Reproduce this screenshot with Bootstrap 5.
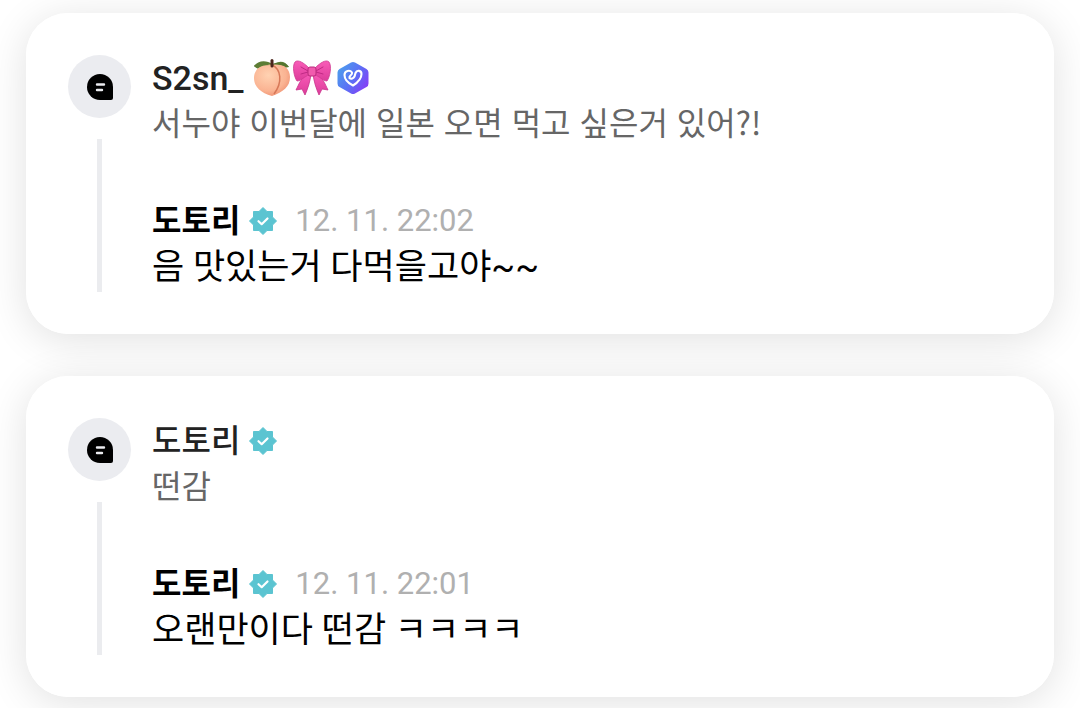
<!DOCTYPE html>
<html lang="ko">
<head>
<meta charset="utf-8">
<meta name="viewport" content="width=device-width, initial-scale=1">
<title>도토리</title>
<link href="https://cdn.jsdelivr.net/npm/bootstrap@5.3.0/dist/css/bootstrap.min.css" rel="stylesheet">
<style>
  body { font-family: Roboto, "Noto Sans CJK KR", sans-serif; background: #fff; color: #000; overflow-x: hidden; }
  .feed { padding: 13px 26px 11px; gap: 42px; isolation: isolate; }
  .thread { position: relative; border: 0; border-radius: 42px; }
  /* shadows sit behind every card, so neighbours stay white */
  .thread::before { content: ""; position: absolute; inset: 0; z-index: -1; border-radius: inherit; box-shadow: 0 6px 42px rgba(0, 0, 0, .12); }
  .thread-body { padding: 42px; gap: 21px; }
  .avatar { width: 63px; height: 63px; background: #ebecf0; }
  .rail { gap: 21px; }
  .rail-line { width: 5px; background: #ebecef; }
  .row-line { line-height: 46px; min-height: 46px; }
  .author { font-size: 34px; font-weight: 500; color: #222; }
  .author-ko { font-size: 32px; font-weight: 500; color: #222; }
  .owner { font-weight: 700; color: #000; }
  .question { font: 32px/40px "Noto Sans CJK KR", sans-serif; color: #666; }
  .answer { font-size: 35px; line-height: 48px; }
  .stamp { font-size: 31px; color: #b0b0b0; margin-left: 17px; }
  .reply { margin-top: 57px; }
  .check { margin-left: 8px; }
</style>
</head>
<body>
<svg width="0" height="0" class="position-absolute" aria-hidden="true">
  <symbol id="bubble" viewBox="0 0 28 28">
    <path d="M14 1A13 13 0 0 1 27 14V25Q27 27 25 27H14A13 13 0 0 1 14 1Z" fill="#000"/>
    <path d="M11 11.500h7M11 17h5" stroke="#ebecf0" stroke-width="2.400" stroke-linecap="round"/>
  </symbol>
  <symbol id="verified" viewBox="0 0 30 30">
    <path d="M15 1.500 19 5.500H24.500V11L28.500 15 24.500 19V24.500H19L15 28.500 11 24.500H5.500V19L1.500 15 5.500 11V5.500H11Z" fill="#5bc4d1" stroke="#5bc4d1" stroke-linejoin="round"/>
    <path d="M10.500 15.200 13.700 18.200 19.500 12.500" fill="none" stroke="#fff" stroke-width="2.200" stroke-linecap="round" stroke-linejoin="round"/>
  </symbol>
</svg>
<main class="feed d-flex flex-column">
  <article class="thread card">
    <div class="thread-body d-flex">
      <div class="rail d-flex flex-column align-items-center">
        <div class="avatar rounded-circle d-flex align-items-center justify-content-center flex-shrink-0">
          <svg width="28" height="28" aria-hidden="true"><use href="#bubble"/></svg>
        </div>
        <div class="rail-line flex-grow-1"></div>
      </div>
      <div class="flex-grow-1">
        <div class="row-line d-flex align-items-center">
          <span class="author">S2sn_</span>
          <svg class="ms-2" width="40" height="40" viewBox="0 0 40 40" aria-label="복숭아">
            <defs><radialGradient id="peach" cx=".4" cy=".35" r=".75"><stop offset="0" stop-color="#ffd2b2"/><stop offset=".65" stop-color="#fab392"/><stop offset="1" stop-color="#ed8a6b"/></radialGradient></defs>
            <path d="M20 6C15 2 6 2 2 8Q6 13 14 10L20 7Q27 12 37 9Q33 3 27 4Z" fill="#5d7d36"/>
            <path d="M20 7C12 4 2 10 2 20C2 29 9 35 20 38C31 34 38 29 38 19C38 9 29 4 20 7Z" fill="url(#peach)"/>
            <path d="M20 7C29 11 31 24 22 36" fill="none" stroke="#d77858" stroke-width="1.500"/>
            <path d="M2 8Q9 2 18 7Q10 7 6 10Z" fill="#5d7d36"/><path d="M22 6Q31 2 37 9Q30 7 22 6Z" fill="#55752f"/>
            <path d="M20 2.500V8" stroke="#4c251d" stroke-width="3" stroke-linecap="round"/>
          </svg>
          <svg width="40" height="40" viewBox="0 0 40 40" aria-label="리본">
            <defs><linearGradient id="bow" x2="0" y2="1"><stop stop-color="#f95cb8"/><stop offset="1" stop-color="#dc3c9a"/></linearGradient></defs>
            <path d="M16 15C10 18 7 26 4 32L10 31 13 37C16 30 18 24 19 16ZM24 15C30 18 33 26 36 32L30 31 27 37C24 30 22 24 21 16Z" fill="url(#bow)" stroke="#c8328a" stroke-width=".8"/>
            <path d="M17 10C12 5 6 1 3 4C0 8 2 19 5 23C9 23 13 18 17 17ZM23 10C28 5 34 1 37 4C40 8 38 19 35 23C31 23 27 18 23 17Z" fill="url(#bow)" stroke="#cf3a91" stroke-width=".8"/>
            <path d="M9 9 16 13M9 16 16 14M31 9 24 13M31 16 24 14" stroke="#c02a85" stroke-width="1" stroke-linecap="round"/>
            <rect x="16" y="9" width="8" height="9" rx="2" fill="#f15bae" stroke="#b92b7c"/>
          </svg>
          <svg class="ms-1" width="34" height="34" viewBox="0 0 34 34" aria-label="멤버십">
            <defs><linearGradient id="hex" x1="0" y1=".2" x2="1" y2=".85"><stop stop-color="#4c9eec"/><stop offset=".5" stop-color="#5b70f5"/><stop offset="1" stop-color="#8b38f6"/></linearGradient></defs>
            <path d="M15 1.600Q17 .5 19 1.600L30.500 8Q32.500 9 32.500 11.500V22.500Q32.500 25 30.500 26L19 32.400Q17 33.500 15 32.400L3.500 26Q1.500 25 1.500 22.500V11.500Q1.500 9 3.500 8Z" fill="url(#hex)"/>
            <path d="M13.500 17C15 18.500 17.500 17.500 18.500 15.500L19.500 12C21 8.500 25.500 9.500 25.500 13C25.500 18 21 22 17 24.500C12 22 8.500 18 8.500 14C8.500 9.500 14 8.500 16 11.500C17 14 12.500 14.500 13.500 17" fill="none" stroke="#fff" stroke-width="2.100" stroke-linecap="round" stroke-linejoin="round"/>
          </svg>
        </div>
        <div class="question">서누야 이번달에 일본 오면 먹고 싶은거 있어?!</div>
        <div class="reply">
          <div class="row-line d-flex align-items-center">
            <span class="author-ko owner">도토리</span>
            <svg class="check" width="30" height="30" aria-label="인증됨"><use href="#verified"/></svg>
            <time class="stamp">12. 11. 22:02</time>
          </div>
          <div class="answer">음 맛있는거 다먹을고야~~</div>
        </div>
      </div>
    </div>
  </article>
  <article class="thread card">
    <div class="thread-body d-flex">
      <div class="rail d-flex flex-column align-items-center">
        <div class="avatar rounded-circle d-flex align-items-center justify-content-center flex-shrink-0">
          <svg width="28" height="28" aria-hidden="true"><use href="#bubble"/></svg>
        </div>
        <div class="rail-line flex-grow-1"></div>
      </div>
      <div class="flex-grow-1">
        <div class="row-line d-flex align-items-center">
          <span class="author-ko">도토리</span>
          <svg class="check" width="30" height="30" aria-label="인증됨"><use href="#verified"/></svg>
        </div>
        <div class="question">떤감</div>
        <div class="reply">
          <div class="row-line d-flex align-items-center">
            <span class="author-ko owner">도토리</span>
            <svg class="check" width="30" height="30" aria-label="인증됨"><use href="#verified"/></svg>
            <time class="stamp">12. 11. 22:01</time>
          </div>
          <div class="answer">오랜만이다 떤감 ㅋㅋㅋㅋ</div>
        </div>
      </div>
    </div>
  </article>
</main>
<script src="https://cdn.jsdelivr.net/npm/bootstrap@5.3.0/dist/js/bootstrap.bundle.min.js"></script>
</body>
</html>
